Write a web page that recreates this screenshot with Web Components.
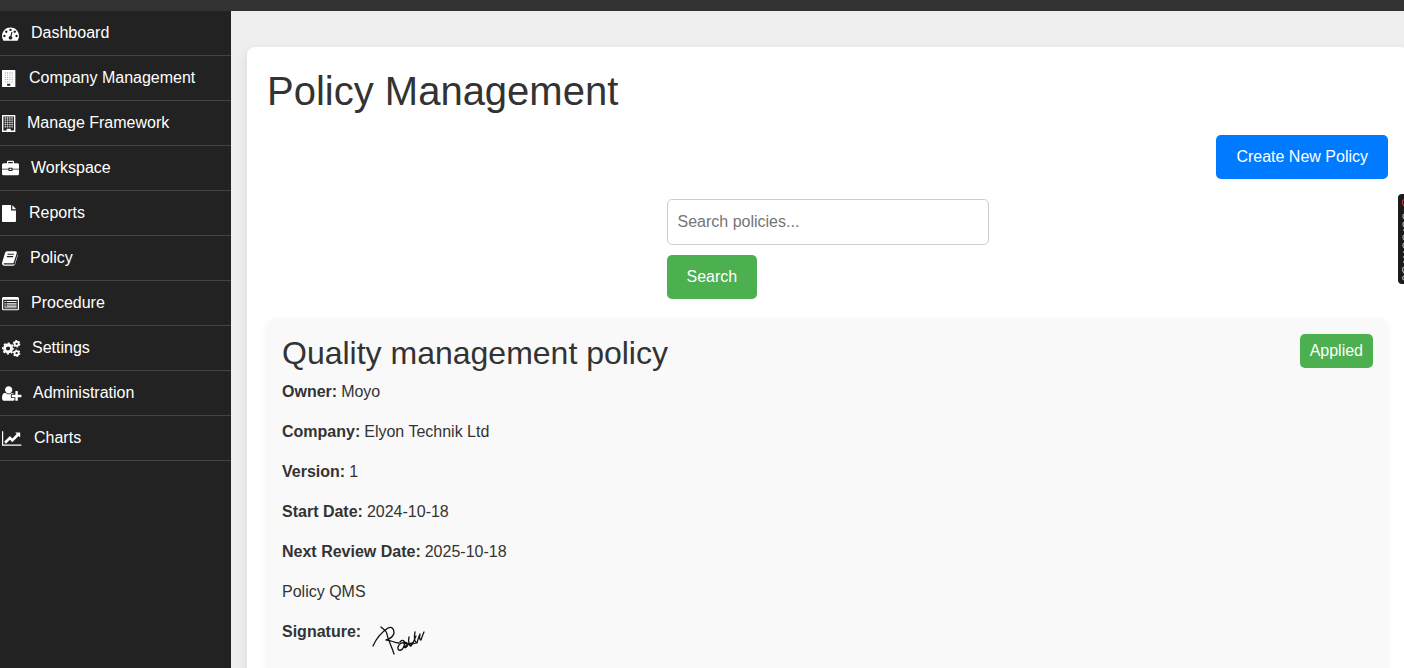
<!DOCTYPE html>
<html lang="en">
<head>
<meta charset="utf-8">
<meta name="viewport" content="width=device-width, initial-scale=1">
<title>Policy Management</title>
<style>
html, body { margin: 0; height: 100%; }
body { font: 16px/24px "Liberation Sans", Arial, sans-serif; color: #333; background: #efefef; overflow: hidden; }
</style>
</head>
<body>
<app-shell>
  <nav-item slot="nav" icon="dashboard">Dashboard</nav-item>
  <nav-item slot="nav" icon="building">Company Management</nav-item>
  <nav-item slot="nav" icon="office">Manage Framework</nav-item>
  <nav-item slot="nav" icon="briefcase">Workspace</nav-item>
  <nav-item slot="nav" icon="file">Reports</nav-item>
  <nav-item slot="nav" icon="book">Policy</nav-item>
  <nav-item slot="nav" icon="list">Procedure</nav-item>
  <nav-item slot="nav" icon="cogs">Settings</nav-item>
  <nav-item slot="nav" icon="userplus">Administration</nav-item>
  <nav-item slot="nav" icon="chart">Charts</nav-item>
  <page-panel heading="Policy Management">
    <action-button slot="action" tone="primary">Create New Policy</action-button>
    <policy-search></policy-search>
    <policy-card heading="Quality management policy" status="Applied">
      <policy-field label="Owner:">Moyo</policy-field>
      <policy-field label="Company:">Elyon Technik Ltd</policy-field>
      <policy-field label="Version:">1</policy-field>
      <policy-field label="Start Date:">2024-10-18</policy-field>
      <policy-field label="Next Review Date:">2025-10-18</policy-field>
      <policy-field>Policy QMS</policy-field>
      <policy-field label="Signature:"><signature-mark></signature-mark></policy-field>
    </policy-card>
  </page-panel>
</app-shell>
<side-tab></side-tab>
<script>
const define = (name, html, setup) => {
  const template = document.createElement('template');
  template.innerHTML = html;
  customElements.define(name, class extends HTMLElement {
    constructor() {
      super();
      this.attachShadow({ mode: 'open' }).append(template.content.cloneNode(true));
    }
    connectedCallback() { if (setup) setup(this, this.shadowRoot); }
  });
};

let windows = '';
for (let r = 0; r < 5; r++) for (let c = 0; c < 4; c++) windows += `M${300 + c * 240} ${256 + r * 236}h100v100h-100z`;

// Each icon: [box width in pixels, markup drawn on a 1792-unit tall grid].
const icons = {
  dashboard: [17, '<path d="M384 1152q0-53-37.5-90.5t-90.5-37.5-90.5 37.5-37.5 90.5 37.5 90.5 90.5 37.5 90.5-37.5 37.5-90.5zm192-448q0-53-37.5-90.5t-90.5-37.5-90.5 37.5-37.5 90.5 37.5 90.5 90.5 37.5 90.5-37.5 37.5-90.5zm428 481l101-382q6-26-7.5-48.5t-38.5-29.5-48 6.5-30 39.5l-101 382q-60 5-107 43.5t-63 98.5q-20 77 20 146t117 89 146-20 89-117q16-60-6-117t-72-91zm660-33q0-53-37.5-90.5t-90.5-37.5-90.5 37.5-37.5 90.5 37.5 90.5 90.5 37.5 90.5-37.5 37.5-90.5zm-640-640q0-53-37.5-90.5t-90.5-37.5-90.5 37.5-37.5 90.5 37.5 90.5 90.5 37.5 90.5-37.5 37.5-90.5zm448 192q0-53-37.5-90.5t-90.5-37.5-90.5 37.5-37.5 90.5 37.5 90.5 90.5 37.5 90.5-37.5 37.5-90.5zm320 448q0 261-141 483-19 29-54 29h-1402q-35 0-54-29-141-221-141-483 0-182 71-348t191-286 286-191 348-71 348 71 286 191 191 286 71 348z"/>'],
  building: [15, `<path fill-rule="evenodd" d="M64 0h1280q64 0 64 64v1664q0 64-64 64h-1280q-64 0-64-64v-1664q0-64 64-64zM540 1450h330v220h-330z"/><path d="${windows}" fill="#222" opacity=".6"/>`],
  office: [13, `<path fill-rule="evenodd" d="M64 0h1280q64 0 64 64v1664q0 64-64 64h-1280q-64 0-64-64v-1664q0-64 64-64zM150 150v1490h340v-200h430v200h340v-1490z"/><path d="${windows}"/><path d="M250 306h910M250 542h910M250 778h910M250 1014h910M250 1250h910M350 256v1044M590 256v1044M830 256v1044M1070 256v1044" stroke="#fff" stroke-width="70" opacity=".6"/>`],
  briefcase: [17, '<path fill-rule="evenodd" d="M530 334v-150q0-106 106-106h520q106 0 106 106v150h370q160 0 160 160v416h-680v-96h-432v96h-680v-416q0-160 160-160zM650 334h492v-136h-492zM0 990h680v120q0 50 50 50h332q50 0 50-50v-120h680v464q0 160-160 160h-1472q-160 0-160-160zM800 910h192v150h-192z"/>'],
  file: [15, '<path d="M960 576v-576h-864q-96 0-96 96v1600q0 96 96 96h1280q96 0 96-96v-1120zM1088 448h374q-10-40-38-68l-270-306q-28-28-66-40z"/>'],
  book: [16, '<path fill-rule="evenodd" d="M1640 478q40 57 18 129l-275 906q-19 64-76 107t-122 44h-923q-77 0-149-54t-100-131q-24-67-2-127l300-1014q40-120 110-170 60-40 130-40h861q80 0 122 56t20 129l-274 906q-36 119-70 153t-126 33h-867q-27 0-38 15-11 16 0 43 24 70 144 70h923q29 0 56-15t35-42l300-987q7-22 5-57 38 15 98 46zM575 480q-4 13 2 22t20 10h608q13 0 25-10t17-22l21-64q4-13-2-22t-20-10h-608q-13 0-26 10t-16 22zM492 736q-4 13 2 22t20 10h608q13 0 25-10t17-22l21-64q4-13-2-22t-20-10h-608q-13 0-26 10t-16 22z"/>'],
  list: [17, '<path fill-rule="evenodd" d="M160 210h1472q160 0 160 160v1088q0 160-160 160h-1472q-160 0-160-160v-1088q0-160 160-160zM128 500v944q0 46 46 46h1444q46 0 46-46v-944zM256 620h140v130h-140zM256 860h140v130h-140zM256 1100h140v130h-140zM480 620h1060v130h-1060zM480 860h1060v130h-1060zM480 1100h1060v130h-1060zM256 1310h1284v80h-1284z"/>'],
  cogs: [18, '<g fill="none" stroke="#fff"><circle cx="640" cy="896" r="370" stroke-width="300"/><circle cx="640" cy="896" r="560" stroke-width="160" pathLength="80" stroke-dasharray="5 5" stroke-dashoffset="2.5"/><circle cx="1540" cy="400" r="215" stroke-width="190"/><circle cx="1540" cy="400" r="340" stroke-width="120" pathLength="60" stroke-dasharray="5 5"/><circle cx="1540" cy="1392" r="215" stroke-width="190"/><circle cx="1540" cy="1392" r="340" stroke-width="120" pathLength="60" stroke-dasharray="5 5"/></g>'],
  userplus: [19, '<path d="M704 896q-159 0-271.5-112.5t-112.5-271.5 112.5-271.5 271.5-112.5 271.5 112.5 112.5 271.5-112.5 271.5-271.5 112.5zm960 128h352q13 0 22.5 9.5t9.5 22.5v192q0 13-9.5 22.5t-22.5 9.5h-352v352q0 13-9.5 22.5t-22.5 9.5h-192q-13 0-22.5-9.5t-9.5-22.5v-352h-352q-13 0-22.5-9.5t-9.5-22.5v-192q0-13 9.5-22.5t22.5-9.5h352v-352q0-13 9.5-22.5t22.5-9.5h192q13 0 22.5 9.5t9.5 22.5v352zm-736 224q0 52 38 90t90 38h256v238q-68 50-171 50h-874q-121 0-194-69t-73-190q0-53 3.5-103.5t14-109 26.5-108.5 43-97.5 62-81 85.5-53.5 111.5-20q19 0 39 17 79 61 154.5 91.5t164.5 30.5 164.5-30.5 154.5-91.5q20-17 39-17 132 0 217 96h-223q-52 0-90 38t-38 90v192z"/>'],
  chart: [20, '<path d="M2048 1536v128h-2048v-1536h128v1408h1920zm-128-1248v435q0 21-19.5 29.5t-35.5-7.5l-121-121-633 633q-10 10-23 10t-23-10l-233-233-416 416-192-192 585-585q10-10 23-10t23 10l233 233 464-464-121-121q-16-16-7.5-35.5t29.5-19.5h435q14 0 23 9t9 23z"/>']
};

define('app-shell', `
<style>
:host { display: grid; grid-template: 11px 1fr / 231px minmax(0, 1fr); height: 100%; }
header { grid-column: 1 / -1; background: #333; }
nav { background: #222; }
main { padding: 36px 0 0 16px; min-width: 0; }
</style>
<header></header>
<nav aria-label="Main"><slot name="nav"></slot></nav>
<main><slot></slot></main>`);

define('nav-item', `
<style>
:host { display: block; border-bottom: 1px solid #444; }
a { display: flex; align-items: flex-start; gap: 12px; padding: 10px 2px; color: #fff; text-decoration: none; }
svg { flex: none; height: 17px; fill: #fff; margin-top: 4px; overflow: visible; }
</style>
<a href="#"><svg aria-hidden="true"></svg><span><slot></slot></span></a>`,
(host, root) => {
  const [width, markup] = icons[host.getAttribute('icon')];
  const svg = root.querySelector('svg');
  svg.setAttribute('width', width);
  svg.setAttribute('viewBox', `0 0 ${width * 1792 / 17} 1792`);
  svg.innerHTML = markup;
});

define('page-panel', `
<style>
:host { display: block; min-height: 100%; margin-right: -4px; padding: 20px; box-sizing: border-box; background: #fff; border-radius: 8px; box-shadow: 0 4px 12px rgba(0,0,0,.1); }
h1 { margin: 0 0 20px; font-size: 40px; line-height: 48px; font-weight: 400; }
.actions { display: flex; justify-content: flex-end; margin-bottom: 20px; }
</style>
<h1></h1>
<div class="actions"><slot name="action"></slot></div>
<slot></slot>`,
(host, root) => { root.querySelector('h1').textContent = host.getAttribute('heading'); });

define('action-button', `
<style>
:host { display: block; }
button { display: block; font: inherit; color: #fff; background: #4caf50; border: 0; border-radius: 5px; padding: 10px 20px; cursor: pointer; }
:host([tone="primary"]) button { background: #007bff; }
</style>
<button type="button"><slot></slot></button>`);

define('policy-search', `
<style>
:host { display: flex; justify-content: center; margin-bottom: 20px; }
form { display: flex; flex-direction: column; align-items: flex-start; gap: 10px; width: 322px; }
input { box-sizing: border-box; width: 100%; font: inherit; color: #333; background: #fff; border: 1px solid #ccc; border-radius: 5px; padding: 10px; height: 46px; }
input::placeholder { color: #757575; }
</style>
<form role="search"><input type="search" aria-label="Search policies" placeholder="Search policies..."><action-button>Search</action-button></form>`);

define('policy-card', `
<style>
:host { display: block; padding: 15px; background: #f9f9f9; border-radius: 8px; box-shadow: 0 2px 8px rgba(0,0,0,.05); }
header { display: flex; justify-content: space-between; align-items: flex-start; margin-bottom: 8px; }
h2 { margin: 0; font-size: 32px; line-height: 38px; font-weight: 400; }
.status { color: #fff; background: #4caf50; border-radius: 5px; padding: 5px 10px; }
</style>
<header><h2></h2><span class="status"></span></header>
<slot></slot>`,
(host, root) => {
  root.querySelector('h2').textContent = host.getAttribute('heading');
  root.querySelector('.status').textContent = host.getAttribute('status');
});

define('policy-field', `
<style>
:host { display: block; }
p { display: flex; gap: 4px; margin: 0 0 16px; }
b:empty { display: none; }
</style>
<p><b></b><span><slot></slot></span></p>`,
(host, root) => { root.querySelector('b').textContent = host.getAttribute('label') || ''; });

define('signature-mark', `
<style>
:host { display: block; }
svg { display: block; width: 64px; height: 40px; fill: none; stroke: #111; stroke-width: 1.3; stroke-linecap: round; stroke-linejoin: round; }
</style>
<svg viewBox="0 0 64 40" role="img" aria-label="Signature"><path d="M8 26C11 19 17 12 23 8c4-2 6 1 6 5c-1 4-4 6-8 7c5 0 8 3 13 3M16 7c2 2 5 3 6 7c1 6 5 13 7 20M35 22c3-4 6 0 4 4c-2 6-7 5-6 1c1-4 7-6 9-4c2 3-2 6-3 4c4-2 7-5 9-4M44 17c-1 4 0 9 2 9c2-2 3-6 5-10M50 12c-1 5-1 10 2 11c1-4 2-7 3-9c-1 4 0 6 1 6c1-3 2-6 3-8M38 23c4 1 9 2 13 0"/></svg>`);

define('side-tab', `
<style>
:host { position: fixed; right: 0; top: 194px; }
button { display: block; padding: 0; border: 0; width: 6px; height: 90px; background: #1b1b1b; border-radius: 4px 0 0 4px; overflow: hidden; }
svg { display: block; width: 6px; height: 90px; fill: none; stroke: #aaa; stroke-width: 1.3; }
</style>
<button type="button" aria-label="Open side panel"><svg viewBox="0 0 6 90"><rect x="4.500" y="5.500" width="6" height="6" rx="2" stroke="#e04040" stroke-width="1"/><path d="M6 20q-2 2 0 5M6 28q-2 2 0 5M5 36h1M6 41q-2 2 0 5M6 49q-2 2 0 5M5 58h1M5 63h1M5 68h1M6 73q-3 2 0 6M6 82q-3 2 0 4"/></svg></button>`);
</script>
</body>
</html>
